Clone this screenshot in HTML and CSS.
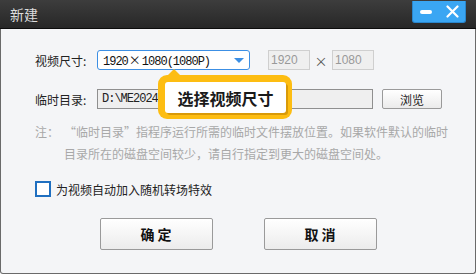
FILE: index.html
```html
<!DOCTYPE html>
<html lang="zh">
<head>
    <meta charset="utf-8">
    <title>新建</title>
    <link rel="stylesheet" href="styles.css">
</head>
<body>
    <div class="window">
        <header class="titlebar">
            <span class="title">新建</span>
            <div class="controls">
                <span class="ctl-min"></span>
                <svg class="ctl-close" width="13" height="13" viewBox="0 0 13 13">
                    <path d="M1.5 1.5 L11.5 11.5 M11.5 1.5 L1.5 11.5" stroke="#fff" stroke-width="2.2" stroke-linecap="round"/>
                </svg>
            </div>
        </header>

        <main class="content">
            <div class="row row-size">
                <label class="lbl">视频尺寸:</label>
                <div class="select">
                    <span class="select-text">1920<span class="wide">×</span>1080(1080P)</span>
                    <span class="caret"></span>
                </div>
                <span class="field small">1920</span>
                <span class="times">×</span>
                <span class="field small">1080</span>
            </div>

            <div class="row row-path">
                <label class="lbl">临时目录:</label>
                <span class="field path">D:\ME20240</span>
                <button class="btn-browse">浏览</button>
            </div>

            <div class="note">
                <span class="note-head">注：</span>
                <p>“临时目录”指程序运行所需的临时文件摆放位置。如果软件默认的临时目录所在的磁盘空间较少，请自行指定到更大的磁盘空间处。</p>
            </div>

            <div class="check">
                <span class="box"></span>
                <span>为视频自动加入随机转场特效</span>
            </div>

            <div class="actions">
                <button class="btn">确 定</button>
                <button class="btn">取 消</button>
            </div>

            <div class="tip">
                <span class="tip-arrow"></span>
                <div class="tip-inner">选择视频尺寸</div>
            </div>
        </main>
    </div>
</body>
</html>
```

FILE: styles.css
```css
body {
    margin: 0;
    width: 476px;
    height: 275px;
    overflow: hidden;
    background: #ffffff;
    font-family: "Noto Sans CJK SC", "Noto Sans", sans-serif;
}

.window {
    width: 476px;
    height: 275px;
    display: flex;
    flex-direction: column;
}

.titlebar {
    height: 29px;
    flex: none;
    background: linear-gradient(#3d3d3d, #272727);
    border-bottom: 1px solid #0c0c0c;
    box-sizing: border-box;
    display: flex;
    align-items: flex-start;
    justify-content: space-between;
    padding-left: 10px;
}

.title {
    color: #dcdcdc;
    font-size: 14px;
    line-height: 29px;
}

.controls {
    margin: 1px 10px 0 0;
    width: 54px;
    height: 22px;
    background: #3aa6f3;
    border: 1px solid #2a86cc;
    border-top: none;
    border-radius: 0 0 3px 3px;
    display: flex;
    align-items: center;
    padding-left: 7px;
    box-sizing: border-box;
    gap: 14px;
}

.ctl-min {
    width: 12px;
    height: 4px;
    background: #fff;
    border-radius: 2px;
}

.content {
    position: relative;
    flex: 1;
    background: #f4f5f7;
    border: 1px solid #6a6a6a;
    border-top: none;
    border-radius: 0 0 3px 3px;
    margin-bottom: 1px;
    padding: 21px 0 0 34px;
    font-size: 12px;
    color: #222;
}

.row {
    display: flex;
    align-items: center;
    height: 20px;
}

.row-path {
    margin-top: 19px;
}

.lbl {
    width: 62px;
    font-size: 12px;
    color: #222;
}

.select {
    width: 153px;
    height: 20px;
    box-sizing: border-box;
    border: 1px solid #3c8fe4;
    border-radius: 3px;
    background: #fff;
    display: flex;
    align-items: center;
    justify-content: space-between;
    padding: 0 5px;
}

.select-text {
    font-family: "Liberation Mono", "Noto Sans CJK SC", monospace;
    font-size: 12px;
    letter-spacing: -1px;
    color: #111;
}

.select-text .wide {
    font-family: "Noto Sans CJK SC", sans-serif;
    letter-spacing: 0;
    padding: 0 1px;
}

.caret {
    width: 0;
    height: 0;
    border-left: 5px solid transparent;
    border-right: 5px solid transparent;
    border-top: 5px solid #3c8fe4;
}

.field {
    height: 20px;
    box-sizing: border-box;
    background: #efefef;
    border: 1px solid #cfcfcf;
    font-family: "Liberation Sans", sans-serif;
    font-size: 12px;
    color: #999;
    line-height: 18px;
    padding-left: 2px;
}

.field.small {
    width: 42px;
}

.row-size .field.small:first-of-type {
    margin-left: 18px;
}

.times {
    width: 22px;
    text-align: center;
    color: #555;
    font-size: 13px;
}

.field.path {
    width: 276px;
    border-color: #8f8f8f;
    color: #222;
    font-family: "Liberation Mono", monospace;
    letter-spacing: -1px;
    padding-left: 4px;
}

.btn-browse {
    margin-left: 9px;
    width: 60px;
    height: 20px;
    padding: 0;
    border: 1px solid #9a9a9a;
    border-radius: 2px;
    background: linear-gradient(#ffffff, #ebebeb);
    font-family: inherit;
    font-size: 12px;
    color: #222;
}

.note {
    display: flex;
    margin-top: 12px;
    color: #a8a8a8;
    font-size: 12px;
    line-height: 22px;
}

.note-head {
    width: 29px;
    flex: none;
}

.note p {
    margin: 0;
    width: 386px;
}

.check {
    display: flex;
    align-items: center;
    gap: 5px;
    margin-top: 16px;
    height: 16px;
}

.box {
    width: 16px;
    height: 16px;
    box-sizing: border-box;
    border: 2px solid #1f6fc0;
    background: #fff;
}

.actions {
    display: flex;
    justify-content: center;
    gap: 51px;
    margin: 21px 0 0 -34px;
}

.btn {
    width: 113px;
    height: 32px;
    border: 1px solid #9a9a9a;
    border-radius: 2px;
    background: linear-gradient(#ffffff, #ececec);
    font-family: inherit;
    font-size: 14px;
    font-weight: bold;
    color: #111;
    padding: 0;
}

/* tooltip over the path row */
.tip {
    position: absolute;
    left: 157px;
    top: 46px;
    width: 134px;
    height: 44px;
    background: #fdbd12;
    border-radius: 9px;
    box-sizing: border-box;
    padding: 7px 6px 6px 7px;
}

.tip-arrow {
    position: absolute;
    left: 9px;
    top: -6px;
    width: 0;
    height: 0;
    border-left: 7px solid transparent;
    border-right: 7px solid transparent;
    border-bottom: 7px solid #fdbd12;
}

.tip-inner {
    height: 31px;
    background: #fff;
    border-radius: 3px;
    box-shadow: 2px 2px 0 #d99a08;
    display: flex;
    align-items: center;
    justify-content: center;
    font-size: 16px;
    font-weight: bold;
    color: #1a1a1a;
}
```
